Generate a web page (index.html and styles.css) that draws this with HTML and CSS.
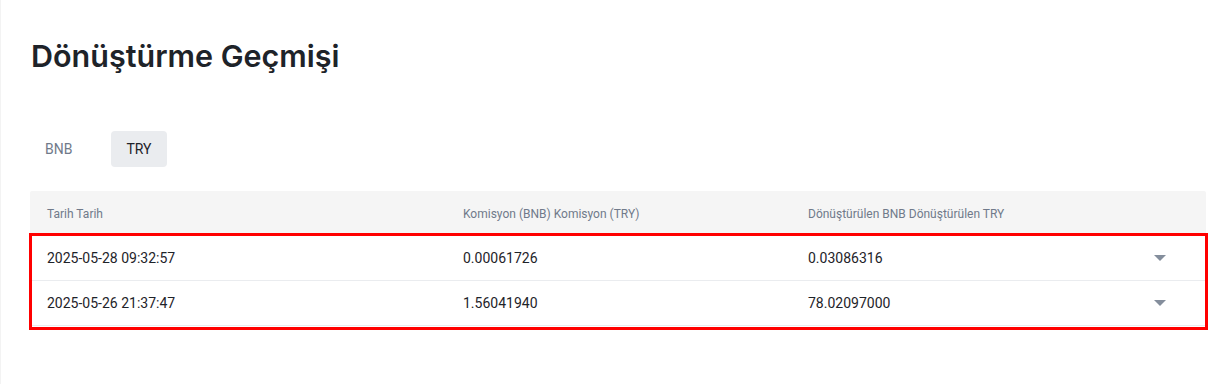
FILE: index.html
```html
<!DOCTYPE html>
<html lang="tr">
<head>
<meta charset="utf-8">
<title>Dönüştürme Geçmişi</title>
<link rel="stylesheet" href="styles.css">
</head>
<body>
<div class="page">
  <h1 class="title">Dönüştürme Geçmişi</h1>
  <div class="tabs">
    <button class="tab">BNB</button>
    <button class="tab tab-active">TRY</button>
  </div>
  <div class="table">
    <div class="thead">
      <div class="cell c1">Tarih Tarih</div>
      <div class="cell c2">Komisyon (BNB) Komisyon (TRY)</div>
      <div class="cell c3">Dönüştürülen BNB Dönüştürülen TRY</div>
      <div class="cell c4"></div>
    </div>
    <div class="tbody">
      <div class="row">
        <div class="cell c1">2025-05-28 09:32:57</div>
        <div class="cell c2">0.00061726</div>
        <div class="cell c3">0.03086316</div>
        <div class="cell c4"><span class="caret"></span></div>
      </div>
      <div class="row">
        <div class="cell c1">2025-05-26 21:37:47</div>
        <div class="cell c2">1.56041940</div>
        <div class="cell c3">78.02097000</div>
        <div class="cell c4"><span class="caret"></span></div>
      </div>
      <div class="highlight"></div>
    </div>
  </div>
</div>
</body>
</html>
```

FILE: styles.css
```css
* { box-sizing: border-box; }
html, body { margin: 0; padding: 0; background: #fff; }
body {
  font-family: Roboto, "Liberation Sans", sans-serif;
  color: #1e2329;
  box-shadow: inset 1px 0 0 #f3f3f3;
  min-height: 384px;
}
.page { padding: 36px 24px 0 30px; }
.title {
  margin: 0 0 0 1px;
  font-family: Inter, "Noto Sans", sans-serif;
  font-size: 30.5px;
  line-height: 40px;
  font-weight: 600;
  color: #1e2329;
}
.tabs {
  display: flex;
  gap: 24px;
  margin-top: 55px;
}
.tab {
  height: 36px;
  padding: 0 15px;
  border: 0;
  border-radius: 4px;
  background: transparent;
  font-family: inherit;
  font-size: 14px;
  color: #707a8a;
  cursor: pointer;
}
.tab-active { background: #eaecef; color: #1e2329; }
.table { margin-top: 24px; }
.thead {
  display: flex;
  height: 45px;
  align-items: center;
  background: #f5f5f5;
  border-radius: 2px 2px 0 0;
  font-size: 12px;
  color: #707a8a;
}
.tbody { position: relative; }
.row {
  display: flex;
  height: 45px;
  align-items: center;
  border-bottom: 1px solid #eaecef;
  font-size: 14px;
  color: #1e2329;
}
.row:last-of-type { border-bottom: 0; height: 44px; }
.cell { padding-left: 17px; }
.c1 { width: 416px; }
.c2 { width: 345px; }
.c3 { width: 345px; }
.c4 { flex: 1; display: flex; align-items: center; padding-left: 18px; }
.caret {
  width: 0; height: 0;
  border-left: 6px solid transparent;
  border-right: 6px solid transparent;
  border-top: 6px solid #848e9c;
}
.highlight {
  position: absolute;
  top: -3px; bottom: -4px; left: -1px; right: -2px;
  border: 3px solid #ff0000;
  pointer-events: none;
}
```
